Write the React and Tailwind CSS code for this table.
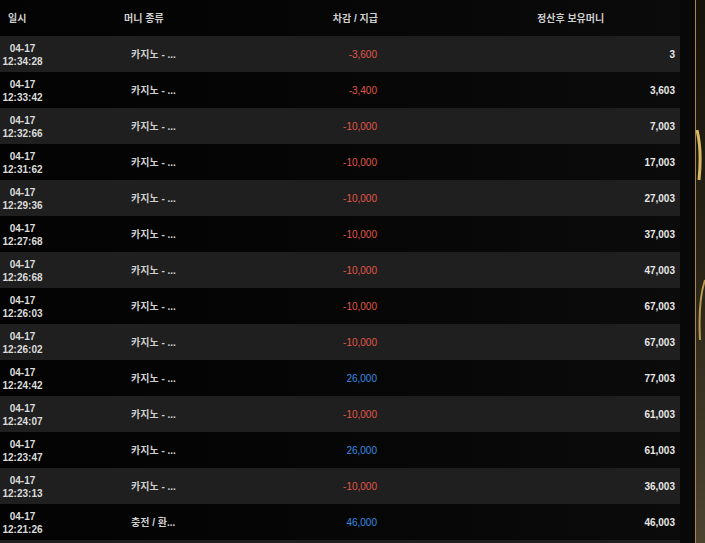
import React from 'react';

const rows = [
  { time: '12:34:28', type: '카지노 - ...', amount: '-3,600', balance: '3' },
  { time: '12:33:42', type: '카지노 - ...', amount: '-3,400', balance: '3,603' },
  { time: '12:32:66', type: '카지노 - ...', amount: '-10,000', balance: '7,003' },
  { time: '12:31:62', type: '카지노 - ...', amount: '-10,000', balance: '17,003' },
  { time: '12:29:36', type: '카지노 - ...', amount: '-10,000', balance: '27,003' },
  { time: '12:27:68', type: '카지노 - ...', amount: '-10,000', balance: '37,003' },
  { time: '12:26:68', type: '카지노 - ...', amount: '-10,000', balance: '47,003' },
  { time: '12:26:03', type: '카지노 - ...', amount: '-10,000', balance: '67,003' },
  { time: '12:26:02', type: '카지노 - ...', amount: '-10,000', balance: '67,003' },
  { time: '12:24:42', type: '카지노 - ...', amount: '26,000', balance: '77,003', plus: true },
  { time: '12:24:07', type: '카지노 - ...', amount: '-10,000', balance: '61,003' },
  { time: '12:23:47', type: '카지노 - ...', amount: '26,000', balance: '61,003', plus: true },
  { time: '12:23:13', type: '카지노 - ...', amount: '-10,000', balance: '36,003' },
  { time: '12:21:26', type: '충전 / 환...', amount: '46,000', balance: '46,003', plus: true },
];

const font = { fontFamily: '"Liberation Sans", "Noto Sans CJK KR", sans-serif' };

export default function App() {
  return (
    <div className="flex h-[543px] w-[705px] overflow-hidden bg-[#050505]" style={font}>
      <div className="w-[680px] shrink-0 bg-gradient-to-r from-[#030303] via-[#060606] to-[#0b0b0b]">
        <div className="flex h-[36px] items-center text-[10px] font-bold text-[#cfcfcf]">
          <div className="w-[45px] pl-[8px]">일시</div>
          <div className="w-[200px] pl-[79px]">머니 종류</div>
          <div className="w-[133px] text-right">차감 / 지급</div>
          <div className="flex-1 pl-[159px]">정산후 보유머니</div>
        </div>
        {rows.map((r, i) => (
          <div
            key={i}
            className={`flex h-[36px] items-center text-[10px] ${i % 2 === 0 ? 'bg-[#1f1f1f]' : ''}`}
          >
            <div className="w-[45px] pt-px text-center font-bold leading-[13px] text-[#dcdcdc]">
              <div>04-17</div>
              <div>{r.time}</div>
            </div>
            <div className="w-[200px] pl-[86px] font-bold text-[#d0d0d0]">{r.type}</div>
            <div className={`w-[132px] text-right ${r.plus ? 'text-[#3a8de0]' : 'text-[#e0574b]'}`}>
              {r.amount}
            </div>
            <div className="flex-1 pr-[5px] text-right font-bold text-[#e6e6e6]">{r.balance}</div>
          </div>
        ))}
        <div className="h-[36px] bg-[#1f1f1f]" />
      </div>
      <div className="w-[15px] shrink-0 bg-[#080808]" />
      <div className="w-px shrink-0 bg-[#a8874e]" />
      <div className="relative flex-1 bg-gradient-to-b from-[#15120c] via-[#2a2416] to-[#4d4430]">
        <svg className="absolute inset-0" width="9" height="543" viewBox="0 0 9 543">
          <path d="M1 130 Q6 150 3 180" stroke="#d8b860" strokeWidth="3" fill="none" />
          <path d="M9 280 Q2 300 4 340" stroke="#b89a50" strokeWidth="2" fill="none" />
        </svg>
      </div>
    </div>
  );
}
